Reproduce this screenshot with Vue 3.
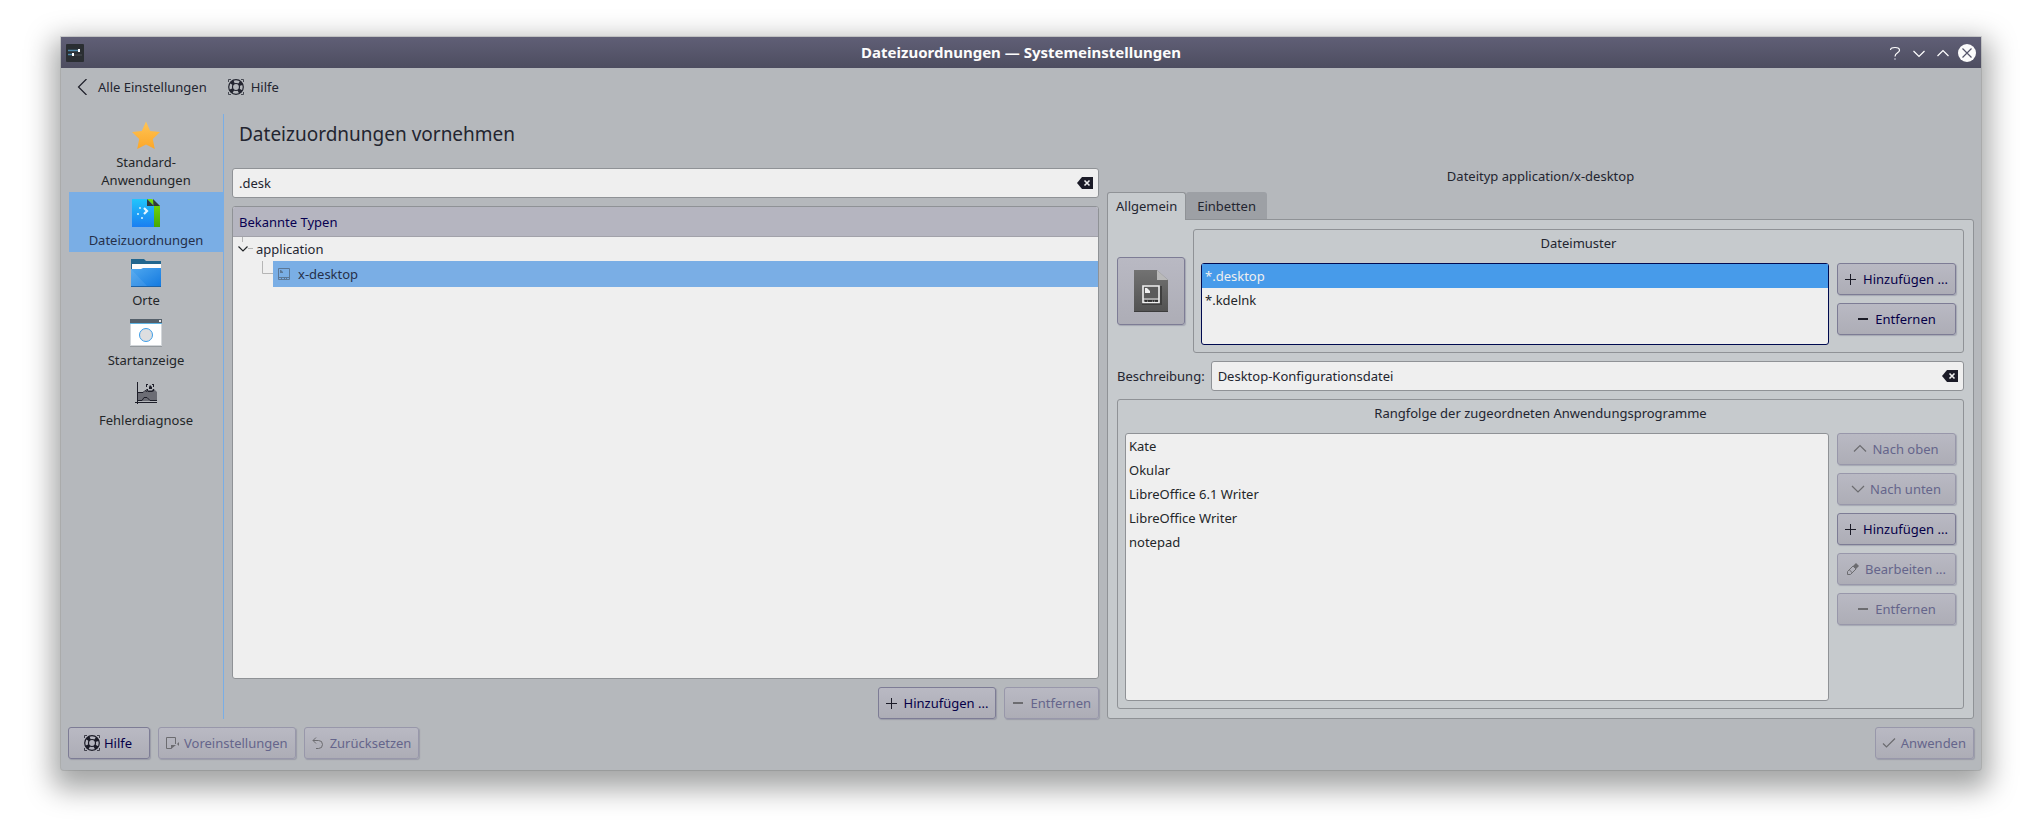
<script setup>
import { ref } from 'vue'

const search = ref('.desk')
const description = ref('Desktop-Konfigurationsdatei')

const modules = [
  { label: 'Standard-Anwendungen', icon: 'star' },
  { label: 'Dateizuordnungen', icon: 'files', active: true },
  { label: 'Orte', icon: 'folder' },
  { label: 'Startanzeige', icon: 'splash' },
  { label: 'Fehlerdiagnose', icon: 'chart' },
]

const patterns = ['*.desktop', '*.kdelnk']
const selectedPattern = ref('*.desktop')

const programs = ['Kate', 'Okular', 'LibreOffice 6.1 Writer', 'LibreOffice Writer', 'notepad']

const programActions = [
  { label: 'Nach oben', icon: 'up', disabled: true },
  { label: 'Nach unten', icon: 'down', disabled: true },
  { label: 'Hinzufügen ...', icon: 'plus', disabled: false },
  { label: 'Bearbeiten ...', icon: 'pencil', disabled: true },
  { label: 'Entfernen', icon: 'minus', disabled: true },
]
</script>

<template>
  <svg class="symbols" width="0" height="0" aria-hidden="true">
    <symbol id="i-help" viewBox="0 0 16 16">
      <circle cx="8" cy="8" r="7.300" fill="none" stroke="currentColor" stroke-width="1.200" />
      <circle cx="8" cy="8" r="3.500" fill="none" stroke="currentColor" stroke-width="1.200" />
      <circle cx="8" cy="8" r="5.500" fill="none" stroke="currentColor" stroke-width="4" stroke-dasharray="3.400 5.239" stroke-dashoffset="-2.620" />
      <path d="M.5 3v-2.500h2.500M13 .5h2.500v2.500M15.500 13v2.500h-2.500M3 15.500h-2.500v-2.500" fill="none" stroke="currentColor" opacity=".75" />
    </symbol>
    <symbol id="i-plus" viewBox="0 0 16 16"><path d="M7.500 3v11M2 8.500h11" stroke="currentColor" /></symbol>
    <symbol id="i-minus" viewBox="0 0 16 16"><path d="M3 8h10" stroke="currentColor" stroke-width="2" /></symbol>
    <symbol id="i-up" viewBox="0 0 16 16"><path d="M2 10.500l6-6 6 6" fill="none" stroke="currentColor" stroke-width="1.200" /></symbol>
    <symbol id="i-down" viewBox="0 0 16 16"><path d="M2 5l6 6 6-6" fill="none" stroke="currentColor" stroke-width="1.200" /></symbol>
    <symbol id="i-pencil" viewBox="0 0 16 16">
      <path d="M2.500 13.500v-3l5.500-5.500 3 3-5.500 5.500zM4.500 9l3 3" fill="none" stroke="currentColor" />
      <path d="M8 5l3-3 3 3-3 3z" fill="currentColor" />
    </symbol>
    <symbol id="i-defaults" viewBox="0 0 16 16">
      <path d="M11.500 9v-6.500h-9v11h5" fill="none" stroke="currentColor" />
      <path d="M7 14v-4h5zM15 7v4l-2-2z" fill="currentColor" />
    </symbol>
    <symbol id="i-undo" viewBox="0 0 16 16">
      <path d="M6 2.500l-3 3 3 3M3 5.500h5.500a4 4 0 0 1 0 8h-2.500" fill="none" stroke="currentColor" />
    </symbol>
    <symbol id="i-check" viewBox="0 0 16 16"><path d="M2 8.500l3.500 3.500 8.500-8.500" fill="none" stroke="currentColor" stroke-width="1.200" /></symbol>
    <symbol id="i-clear" viewBox="0 0 16 12">
      <path d="M0 6l5-6h11v12h-11z" fill="#1b1b27" />
      <path d="M7.500 3.500l5 5M12.500 3.500l-5 5" stroke="#efefef" stroke-width="1.600" />
    </symbol>
    <symbol id="i-star" viewBox="0 0 32 32">
      <path d="M16 2.500l4.200 9.400 9.800 1.200-7.200 7 2 9.900-8.800-4.600-8.800 4.600 2-9.900-7.200-7 9.800-1.200z" fill="url(#g-star)" />
    </symbol>
    <symbol id="i-files" viewBox="0 0 32 32">
      <path d="M17 2h5l8 7v21h-8v-20z" fill="url(#g-green)" />
      <path d="M2 2h15l7 7v21h-22z" fill="url(#g-page)" />
      <path d="M17 2v7h7zM23 2l7 7h-6.500z" fill="#33393c" />
      <path d="M14 11l3 3-3 3" fill="none" stroke="#e4f5ff" stroke-width="2.200" />
      <path d="M9 10h2v2h-2zM7 16h2v2h-2zM11 20h2v2h-2z" fill="#a8defc" />
    </symbol>
    <symbol id="i-folder" viewBox="0 0 32 32">
      <path d="M1 2h13l2 2h15v14h-30z" fill="#21668f" />
      <path d="M2 7h29v9h-29z" fill="#fcfcfc" />
      <path d="M1 12h10l2-1h18v19h-30z" fill="url(#g-folder)" />
      <path d="M1 12l17 18h-17z" fill="#fff" opacity=".08" />
      <path d="M1 29.500h30" stroke="#1b62a8" />
    </symbol>
    <symbol id="i-splash" viewBox="0 0 32 32">
      <path d="M0 6h32v23h-32z" fill="#d2d6da" />
      <path d="M1 7h30v21h-30z" fill="#fff" />
      <path d="M0 2h32v4h-32z" fill="#55606b" />
      <path d="M0 6.500h32" stroke="#5fb5e4" />
      <path d="M0 29.500h32" stroke="#959a9e" />
      <path d="M29 3h2v2h-2z" fill="#e4e6e8" />
      <circle cx="16" cy="18" r="6.500" fill="#dddee0" stroke="#3e9ee8" />
    </symbol>
    <symbol id="i-chart" viewBox="0 0 32 32">
      <path d="M8 15h6l2-2h8v-1l3 3v9h-19z" fill="#6c6d75" />
      <path d="M7.500 5v22M5 25.500h22M8 15.500h5l2-2 2 1" fill="none" stroke="#1d1e29" />
      <path d="M8 23.500h4l2-3h3l3 3h7" fill="none" stroke="#1d1e29" />
      <path d="M16 10v-3h2v1h-1v2zM22 7h2v3h-1v-2h-1zM19 10l1-2 2 2v2h-3zM16 12h2v2h4l1-2h1v2l-2 1h-4z" fill="#1d1e29" />
    </symbol>
    <symbol id="i-desktop" viewBox="0 0 12 12">
      <path d="M.5.5h11v11h-11zM0 9.500h12" fill="none" stroke="#5b7796" />
      <path d="M2 2h1l2 2v1h-3z" fill="#5b7796" />
      <path d="M3.500 9v3M6.500 9v3M8.500 9v3" stroke="#5b7796" />
    </symbol>
    <defs>
      <linearGradient id="g-star" x1="0" y1="0" x2="0" y2="1"><stop stop-color="#ffc455" /><stop offset="1" stop-color="#fca728" /></linearGradient>
      <linearGradient id="g-green" x1="0" y1="0" x2="0" y2="1"><stop stop-color="#7be009" /><stop offset="1" stop-color="#46a804" /></linearGradient>
      <linearGradient id="g-page" x1="0" y1="0" x2="0" y2="1"><stop stop-color="#21c5fc" /><stop offset="1" stop-color="#1a7ef1" /></linearGradient>
      <linearGradient id="g-folder" x1="0" y1="0" x2="1" y2="1"><stop stop-color="#4fa8ef" /><stop offset="1" stop-color="#1379e0" /></linearGradient>
      <linearGradient id="g-doc" x1="0" y1="0" x2="0" y2="1"><stop stop-color="#727272" /><stop offset="1" stop-color="#525252" /></linearGradient>
    </defs>
  </svg>

  <div class="desk">
    <div class="window">
      <header class="titlebar">
        <svg class="appicon" viewBox="0 0 18 18" aria-hidden="true">
          <rect width="18" height="18" rx="1" fill="#2a2e32" />
          <path d="M2 6.500h12M2 10.500h6" stroke="#4e87a8" stroke-width="1.500" />
          <path d="M7 11h9" stroke="#4a4f54" />
          <path d="M12 5h2v3h-2zM6 9h2v3h-2z" fill="#fff" />
        </svg>
        <h1>Dateizuordnungen — Systemeinstellungen</h1>
        <div class="controls">
          <button type="button" aria-label="Kontexthilfe">
            <svg viewBox="0 0 18 18"><path d="M4.500 6c0-2 2-2.500 4.500-2.500s4.500.8 4.500 2.700c0 2.800-4.500 2.300-4.500 6.300" fill="none" stroke="#fff" stroke-width="1.200" /><path d="M8 14h2v2h-2z" fill="#8d8d9f" /></svg>
          </button>
          <button type="button" aria-label="Minimieren">
            <svg viewBox="0 0 18 18"><path d="M3.500 7l5.500 5.500 5.500-5.500" fill="none" stroke="#fff" stroke-width="1.200" /></svg>
          </button>
          <button type="button" aria-label="Maximieren">
            <svg viewBox="0 0 18 18"><path d="M3.500 12l5.500-5.500 5.500 5.500" fill="none" stroke="#fff" stroke-width="1.200" /></svg>
          </button>
          <button type="button" aria-label="Schließen">
            <svg viewBox="0 0 18 18"><circle cx="9" cy="9" r="9" fill="#fcfcfc" /><path d="M4.500 4.500l9 9M13.500 4.500l-9 9" stroke="#55556a" stroke-width="1.200" /></svg>
          </button>
        </div>
      </header>

      <div class="toolbar">
        <button type="button">
          <svg viewBox="0 0 16 16" aria-hidden="true"><path d="M11.500 0l-8 8 8 8" fill="none" stroke="#1d1e29" stroke-width="1.200" /></svg>
          Alle Einstellungen
        </button>
        <button type="button">
          <svg viewBox="0 0 16 16" aria-hidden="true"><use href="#i-help" /></svg>
          Hilfe
        </button>
      </div>

      <div class="body">
        <nav class="sidebar">
          <a v-for="m in modules" :key="m.label" href="#" :class="{ active: m.active }">
            <svg viewBox="0 0 32 32" aria-hidden="true"><use :href="'#i-' + m.icon" /></svg>
            <span>{{ m.label }}</span>
          </a>
        </nav>

        <main class="content">
          <h2>Dateizuordnungen vornehmen</h2>
          <div class="columns">
            <section class="types">
              <div class="field">
                <input v-model="search" type="text" aria-label="Suchmuster" />
                <button type="button" aria-label="Suche löschen" @click="search = ''"><svg viewBox="0 0 16 12"><use href="#i-clear" /></svg></button>
              </div>
              <div class="treebox">
                <h3>Bekannte Typen</h3>
                <ul class="tree" role="tree" aria-label="Bekannte Typen">
                  <li role="treeitem" aria-expanded="true">
                    <div class="branch">
                      <svg class="lines" viewBox="0 0 23 24" aria-hidden="true">
                        <path d="M9.500 0v5M15 11.500h5" stroke="#b5b5b5" />
                        <path d="M5.500 9.500l4.500 4.500 4.500-4.500" fill="none" stroke="#232629" stroke-width="1.200" />
                      </svg>
                      <span>application</span>
                    </div>
                    <ul role="group">
                      <li role="treeitem" aria-selected="true" class="leaf">
                        <svg class="lines" viewBox="0 0 40 26" aria-hidden="true"><path d="M29.500 0v12.500h10.500" fill="none" stroke="#b5b5b5" /></svg>
                        <div class="picked">
                          <svg viewBox="0 0 12 12" aria-hidden="true"><use href="#i-desktop" /></svg>
                          <span>x-desktop</span>
                        </div>
                      </li>
                    </ul>
                  </li>
                </ul>
              </div>
              <div class="actions">
                <button type="button" class="btn"><svg viewBox="0 0 16 16"><use href="#i-plus" /></svg>Hinzufügen ...</button>
                <button type="button" class="btn" disabled><svg viewBox="0 0 16 16"><use href="#i-minus" /></svg>Entfernen</button>
              </div>
            </section>

            <section class="details">
              <p class="mimetype">Dateityp application/x-desktop</p>
              <div class="tabs" role="tablist">
                <button type="button" role="tab" aria-selected="true" class="current">Allgemein</button>
                <button type="button" role="tab" aria-selected="false">Einbetten</button>
              </div>
              <div class="panel" role="tabpanel">
                <div class="toprow">
                  <button type="button" class="iconpick" aria-label="Symbol auswählen">
                    <svg viewBox="0 0 34 42">
                      <path d="M0 0h23l11 10v32h-34z" fill="url(#g-doc)" />
                      <path d="M23 0l11 10h-11z" fill="#b9b9b9" />
                      <path d="M0 41.500h34" stroke="#3c3c3c" />
                      <path d="M8 34h19v-18" fill="none" stroke="#3f3f3f" stroke-width="2" />
                      <path d="M9 16h16v16.500h-16z" fill="#5b5b5b" stroke="#f0f0f0" stroke-width="1.600" />
                      <path d="M9 29h16" stroke="#f0f0f0" />
                      <path d="M11 31h2M14 31h4M19 31h1M21 31h3" stroke="#222" stroke-width="1.500" />
                      <path d="M11 18h2l3 3v2h-5z" fill="#f0f0f0" />
                    </svg>
                  </button>
                  <section class="group grow" aria-labelledby="t-patterns">
                    <h3 id="t-patterns">Dateimuster</h3>
                    <div class="split">
                      <ul class="list focused" role="listbox" aria-labelledby="t-patterns">
                        <li v-for="p in patterns" :key="p" role="option" :aria-selected="p === selectedPattern" :class="{ selected: p === selectedPattern }" @click="selectedPattern = p">{{ p }}</li>
                      </ul>
                      <div class="stack">
                        <button type="button" class="btn"><svg viewBox="0 0 16 16"><use href="#i-plus" /></svg>Hinzufügen ...</button>
                        <button type="button" class="btn"><svg viewBox="0 0 16 16"><use href="#i-minus" /></svg>Entfernen</button>
                      </div>
                    </div>
                  </section>
                </div>

                <div class="descrow">
                  <label for="desc">Beschreibung:</label>
                  <div class="field grow">
                    <input id="desc" v-model="description" type="text" />
                    <button type="button" aria-label="Beschreibung löschen" @click="description = ''"><svg viewBox="0 0 16 12"><use href="#i-clear" /></svg></button>
                  </div>
                </div>

                <section class="group fill" aria-labelledby="t-programs">
                  <h3 id="t-programs">Rangfolge der zugeordneten Anwendungsprogramme</h3>
                  <div class="split">
                    <ul class="list" role="listbox" aria-labelledby="t-programs">
                      <li v-for="p in programs" :key="p" role="option">{{ p }}</li>
                    </ul>
                    <div class="stack">
                      <button v-for="a in programActions" :key="a.label" type="button" class="btn" :disabled="a.disabled">
                        <svg viewBox="0 0 16 16"><use :href="'#i-' + a.icon" /></svg>{{ a.label }}
                      </button>
                    </div>
                  </div>
                </section>
              </div>
            </section>
          </div>
        </main>
      </div>

      <footer class="footer">
        <button type="button" class="btn help"><svg viewBox="0 0 16 16"><use href="#i-help" /></svg>Hilfe</button>
        <button type="button" class="btn" disabled><svg viewBox="0 0 16 16"><use href="#i-defaults" /></svg>Voreinstellungen</button>
        <button type="button" class="btn" disabled><svg viewBox="0 0 16 16"><use href="#i-undo" /></svg>Zurücksetzen</button>
        <button type="button" class="btn apply" disabled><svg viewBox="0 0 16 16"><use href="#i-check" /></svg>Anwenden</button>
      </footer>
    </div>
  </div>
</template>

<style>
body {
  background: #fff;
}
</style>

<style scoped>
* {
  box-sizing: border-box;
}

.symbols {
  position: absolute;
}

.desk {
  display: flex;
  min-height: 100vh;
  padding: 37px 61px 61px;
  font: 13px/18px "Noto Sans", sans-serif;
  color: #232530;
}

button,
input {
  font: inherit;
  color: inherit;
  margin: 0;
  padding: 0;
  border: 0;
  background: none;
  outline: 0;
}

h1,
h2,
h3,
p,
ul {
  margin: 0;
  padding: 0;
  font: inherit;
  list-style: none;
}

svg {
  display: block;
  flex: none;
}

.grow {
  flex: 1;
}

.window {
  flex: 1;
  min-width: 0;
  display: flex;
  flex-direction: column;
  background: #b5b8bc;
  border-radius: 0 0 3px 3px;
  box-shadow: 0 0 0 1px rgba(90, 95, 95, 0.2), 0 11px 28px 8px rgba(0, 5, 5, 0.36);
}

.titlebar {
  display: grid;
  grid-template-columns: 1fr auto 1fr;
  align-items: center;
  height: 31px;
  padding: 0 5px;
  background: linear-gradient(#605f76, #4d4d60);
  color: #fcfcfc;
}

.titlebar h1 {
  padding-bottom: 2px;
  font-weight: 700;
  font-size: 15px;
}

.appicon {
  width: 18px;
  height: 18px;
}

.controls {
  display: flex;
  justify-content: flex-end;
  gap: 6px;
}

.controls svg {
  width: 18px;
  height: 18px;
}

.toolbar {
  display: flex;
  align-items: center;
  gap: 21px;
  height: 38px;
  padding: 0 14px;
}

.toolbar button {
  display: flex;
  align-items: center;
  gap: 7px;
}

.toolbar svg {
  width: 16px;
  height: 16px;
}

.body {
  flex: 1;
  display: flex;
  gap: 8px;
  padding: 8px 7px 0 8px;
}

.sidebar {
  width: 155px;
  flex: none;
  border-right: 1px solid #7aaee5;
}

.sidebar a {
  display: flex;
  flex-direction: column;
  align-items: center;
  gap: 2px;
  padding: 5px 20px 3px;
  color: #232629;
  text-align: center;
  text-decoration: none;
}

.sidebar a.active {
  background: #7aaee5;
  color: #26304a;
}

.sidebar svg {
  width: 32px;
  height: 32px;
}

.content {
  flex: 1;
  min-width: 0;
  display: flex;
  flex-direction: column;
}

.content h2 {
  padding: 0 7px;
  margin-bottom: 14px;
  font-size: 19px;
  line-height: 40px;
}

.columns {
  flex: 1;
  display: grid;
  grid-template-columns: 1fr 1fr;
  gap: 8px;
}

.types,
.details {
  display: flex;
  flex-direction: column;
  min-width: 0;
}

.types {
  gap: 8px;
}

.field {
  display: flex;
  align-items: center;
  height: 30px;
  padding: 0 5px 0 6px;
  border: 1px solid #8f9296;
  border-radius: 3px;
  background: #efefef;
}

.field input {
  flex: 1;
  min-width: 0;
}

.field svg {
  width: 16px;
  height: 12px;
}

.treebox {
  flex: 1;
  border: 1px solid #8f9296;
  border-radius: 3px;
  background: #efefef;
  overflow: hidden;
}

.treebox h3 {
  padding: 0 6px;
  line-height: 30px;
  height: 30px;
  background: #b5b5c0;
  border-bottom: 1px solid #a2a2aa;
  color: #070050;
}

.branch,
.leaf,
.picked {
  display: flex;
  align-items: center;
}

.branch {
  height: 24px;
}

.branch .lines {
  width: 23px;
  height: 24px;
}

.leaf .lines {
  width: 40px;
  height: 26px;
}

.picked {
  flex: 1;
  gap: 8px;
  height: 26px;
  padding-left: 5px;
  background: #7aaee5;
  color: #26304a;
}

.picked svg {
  width: 12px;
  height: 12px;
}

.actions {
  display: flex;
  justify-content: flex-end;
  gap: 8px;
}

.btn {
  display: flex;
  align-items: center;
  justify-content: center;
  gap: 4px;
  height: 32px;
  padding: 0 7px 0 5px;
  border: 1px solid #7d7c95;
  border-radius: 3px;
  background: linear-gradient(#b9b9c3, #adadb6);
  box-shadow: 1px 1px 1px rgba(90, 90, 120, 0.3);
  color: #060048;
  white-space: nowrap;
}

.btn svg {
  width: 16px;
  height: 16px;
  color: #1b1b27;
}

.btn:disabled {
  border-color: #9897aa;
  color: #65658b;
}

.btn:disabled svg {
  color: #6c6c70;
}

.mimetype {
  margin-bottom: 8px;
  line-height: 16px;
  text-align: center;
}

.tabs {
  display: flex;
}

.tabs button {
  height: 27px;
  padding: 0 11px;
  border-radius: 3px 3px 0 0;
  background: #9da0a5;
}

.tabs .current {
  position: relative;
  height: 28px;
  margin-bottom: -1px;
  padding: 0 8px 2px;
  border: 1px solid #8f9296;
  border-bottom: 0;
  background: #c6cacd;
}

.panel {
  flex: 1;
  display: flex;
  flex-direction: column;
  gap: 8px;
  padding: 9px;
  border: 1px solid #8f9296;
  border-radius: 0 3px 3px 3px;
  background: #c6cacd;
}

.toprow {
  display: flex;
  align-items: center;
  gap: 8px;
}

.iconpick {
  display: grid;
  place-items: center;
  width: 68px;
  height: 68px;
  border: 1px solid #7d7c95;
  border-radius: 3px;
  background: linear-gradient(#b9b9c3, #adadb6);
  box-shadow: 1px 1px 1px rgba(90, 90, 120, 0.3);
}

.iconpick svg {
  width: 34px;
  height: 42px;
}

.group {
  display: flex;
  flex-direction: column;
  padding: 4px 7px 7px;
  border: 1px solid #8f9296;
  border-radius: 3px;
}

.group.fill {
  flex: 1;
}

.group h3 {
  margin-bottom: 11px;
  text-align: center;
}

.split {
  flex: 1;
  display: flex;
  gap: 8px;
}

.list {
  flex: 1;
  min-height: 82px;
  border: 1px solid #8f9296;
  border-radius: 3px;
  background: #efefef;
  color: #232629;
}

.list.focused {
  border-color: #000a50;
}

.list li {
  height: 24px;
  padding: 0 3px;
  line-height: 24px;
}

.list .selected {
  background: #479bea;
  color: #efefef;
}

.stack {
  display: flex;
  flex-direction: column;
  gap: 8px;
  min-width: 119px;
}

.descrow {
  display: flex;
  align-items: center;
  gap: 6px;
}

.footer {
  display: flex;
  gap: 8px;
  padding: 8px 7px 11px;
}

.footer .help {
  min-width: 82px;
}

.footer .apply {
  margin-left: auto;
}
</style>
